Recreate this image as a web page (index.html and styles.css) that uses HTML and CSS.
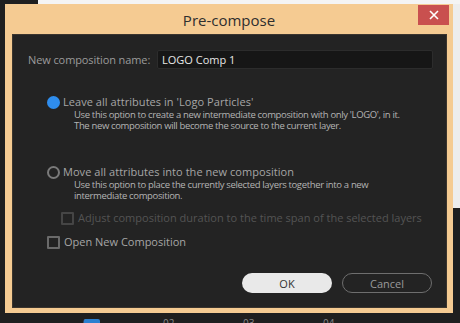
FILE: index.html
```html
<!DOCTYPE html>
<html>
<head>
<meta charset="utf-8">
<link rel="stylesheet" href="styles.css">
</head>
<body>
<div class="dialog">
  <div class="titlebar">
    <span></span>
    <span class="title">Pre-compose</span>
    <button class="close" aria-label="Close">
      <svg width="10" height="10" viewBox="0 0 10 10"><path d="M1 1L9 9M9 1L1 9" stroke="#fff" stroke-width="1.6"/></svg>
    </button>
  </div>
  <div class="panel">
    <div class="name-row">
      <label class="name-label">New composition name:</label>
      <div class="name-input">LOGO Comp 1</div>
    </div>

    <div class="option first">
      <div class="opt-head"><span class="radio on"></span><span class="opt-title">Leave all attributes in 'Logo Particles'</span></div>
      <div class="opt-desc">Use this option to create a new intermediate composition with only 'LOGO', in it.<br>The new composition will become the source to the current layer.</div>
    </div>

    <div class="option second">
      <div class="opt-head"><span class="radio"></span><span class="opt-title">Move all attributes into the new composition</span></div>
      <div class="opt-desc">Use this option to place the currently selected layers together into a new<br>intermediate composition.</div>
    </div>

    <div class="check disabled"><span class="box"></span><span>Adjust composition duration to the time span of the selected layers</span></div>
    <div class="check open"><span class="box"></span><span>Open New Composition</span></div>

    <div class="buttons">
      <button class="btn ok">OK</button>
      <button class="btn cancel">Cancel</button>
    </div>
  </div>
</div>
<div class="timeline">
  <span class="tick blue"></span>
  <span class="tl">01</span><span class="tl">02</span><span class="tl">03</span><span class="tl">04</span>
</div>
</body>
</html>
```
FILE: styles.css
```css
html, body { margin: 0; padding: 0; }
body {
  width: 460px;
  height: 323px;
  overflow: hidden;
  background:
    linear-gradient(#f4f4f4, #f4f4f4) 38px 0 / 422px 4px no-repeat,
    linear-gradient(#ededed, #ededed) 453px 0 / 7px 208px no-repeat,
    #1f1f1f;
  font-family: "Open Sans", "Noto Sans", sans-serif;
}
.dialog {
  margin: 4px 0 0 5px;
  width: 448px;
  height: 309px;
  background: #f5cb92;
  display: flex;
  flex-direction: column;
}
.titlebar {
  height: 30px;
  display: grid;
  grid-template-columns: 1fr auto 1fr;
  align-items: start;
}
.title {
  font-size: 15px;
  color: #2e2e2e;
  line-height: 30px;
  margin-top: 1px;
}
.close {
  justify-self: end;
  margin: 1px 4px 0 0;
  width: 31px;
  height: 20px;
  background: #c9504f;
  border: none;
  padding: 0;
  display: flex;
  align-items: center;
  justify-content: center;
}
.panel {
  flex: 1;
  margin: 0 6px 5px 7px;
  background: #232323;
  border: 1px solid #3b352e;
  display: flex;
  flex-direction: column;
  padding: 15px 0 0 0;
  box-sizing: border-box;
}
.name-row {
  display: flex;
  align-items: center;
  padding-left: 15px;
  gap: 10px;
}
.name-label {
  font-size: 11px;
  color: #9b9b9b;
  width: 119px;
  white-space: nowrap;
  letter-spacing: -0.1px;
}
.name-input {
  width: 276px;
  height: 19px;
  box-sizing: border-box;
  background: #161616;
  border: 1px solid #2c2c2c;
  border-radius: 2px;
  color: #e6e6e6;
  font-size: 11px;
  line-height: 17px;
  padding-left: 4px;
}
.option { padding-left: 34px; }
.option.first { margin-top: 26px; }
.option.second { margin-top: 34px; }
.opt-head {
  display: flex;
  align-items: center;
  gap: 3px;
  height: 14px;
}
.radio {
  flex-shrink: 0;
  width: 13px;
  height: 13px;
  box-sizing: border-box;
  border-radius: 50%;
  border: 2px solid #7a7a7a;
}
.radio.on { background: #2f8ded; border-color: #2f8ded; }
.opt-title {
  font-size: 11px;
  line-height: 14px;
  color: #a6a6a6;
  white-space: nowrap;
  letter-spacing: 0.05px;
}
.opt-desc {
  margin: 0 0 0 27px;
  font-size: 9.5px;
  line-height: 11px;
  color: #b4b4b4;
  white-space: nowrap;
  letter-spacing: -0.35px;
}
.check {
  display: flex;
  align-items: center;
  gap: 4px;
  height: 14px;
  font-size: 11px;
  line-height: 14px;
  white-space: nowrap;
}
.box {
  flex-shrink: 0;
  width: 13px;
  height: 13px;
  box-sizing: border-box;
  border: 2px solid #6a6a6a;
  border-radius: 1px;
}
.check.disabled {
  margin: 10px 0 0 48px;
  color: #545454;
}
.check.disabled .box { border-color: #454545; }
.check.open {
  margin: 10px 0 0 34px;
  color: #a6a6a6;
}
.buttons {
  display: flex;
  gap: 10px;
  margin: 24px 0 0 229px;
}
.btn {
  width: 90px;
  height: 20px;
  border-radius: 10px;
  font-family: "Open Sans", sans-serif;
  font-size: 11px;
  padding: 0;
}
.ok { background: #e9e9e9; border: none; color: #333; }
.cancel { background: transparent; border: 1px solid #6e6e6e; color: #9a9a9a; }
.timeline {
  display: flex;
  align-items: flex-start;
  height: 10px;
  padding-left: 83px;
  position: relative;
}
.tl {
  width: 80px;
  font-size: 10px;
  line-height: 10px;
  color: #8a8a8a;
  margin-top: 5px;
}
.tick.blue {
  position: absolute;
  left: 84px;
  top: 6px;
  width: 16px;
  height: 6px;
  background: #2a7fd0;
  border-radius: 2px;
}
```
